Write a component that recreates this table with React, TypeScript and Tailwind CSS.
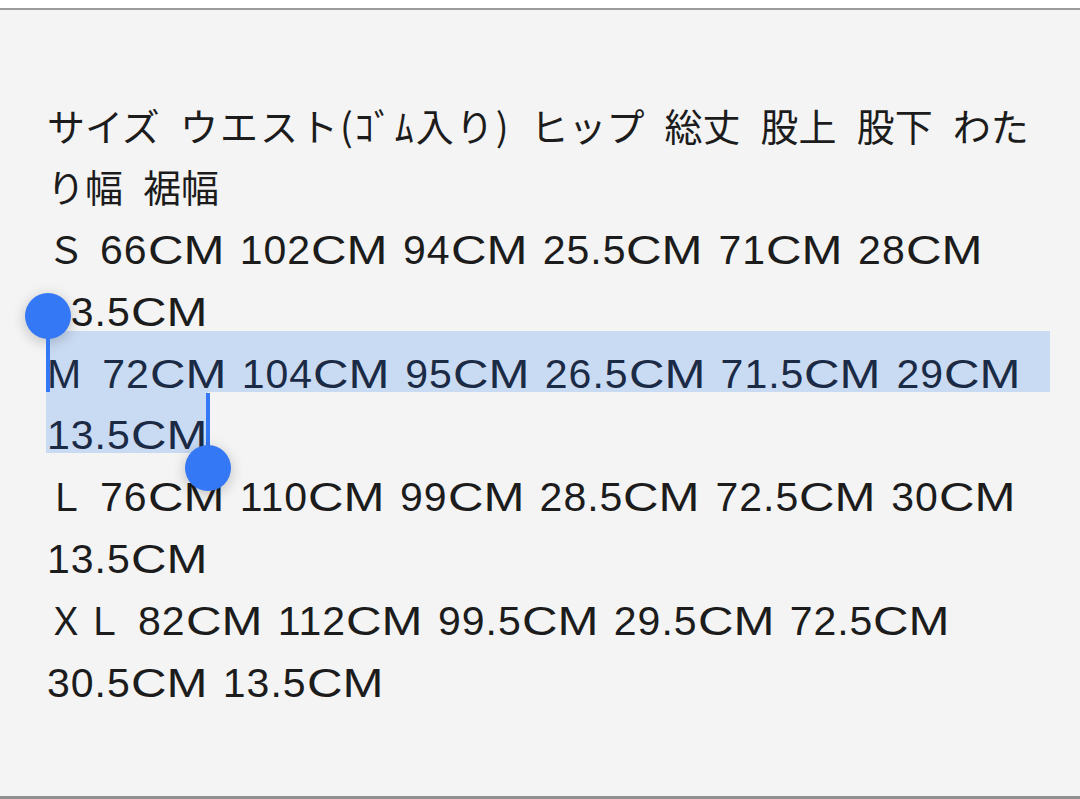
import React from "react";

const lines: string[][] = [
  ["サイズ", "ウエスト(ｺﾞﾑ入り)", "ヒップ", "総丈", "股上", "股下", "わた"],
  ["り幅", "裾幅"],
  ["Ｓ", "66CM", "102CM", "94CM", "25.5CM", "71CM", "28CM"],
  ["13.5CM"],
  ["M", "72CM", "104CM", "95CM", "26.5CM", "71.5CM", "29CM"],
  ["13.5CM"],
  ["Ｌ", "76CM", "110CM", "99CM", "28.5CM", "72.5CM", "30CM"],
  ["13.5CM"],
  ["ＸＬ", "82CM", "112CM", "99.5CM", "29.5CM", "72.5CM"],
  ["30.5CM", "13.5CM"],
];

const latin = { fontFamily: '"Liberation Sans", Arial, sans-serif' };

// one word of a line; numbers + CM get the wider latin treatment
function Token({ t, last }: { t: string; last: boolean }) {
  const m = t.match(/^([0-9.]+)(CM)$/);
  if (m) {
    return (
      <span className={"text-[41px] leading-none " + (last ? "" : "mr-[18px]")} style={latin}>
        <span className="tracking-[1px]">{m[1]}</span>
        <span className="inline-block w-[74px]">
          <span className="inline-block origin-left scale-x-[1.2]">{m[2]}</span>
        </span>
      </span>
    );
  }
  if (t === "M") {
    return (
      <span className="mr-[21px] text-[41px] leading-none" style={latin}>
        M
      </span>
    );
  }
  if (/^[Ａ-Ｚ]+$/.test(t)) {
    return <span className="mr-[15px]">{t}</span>;
  }
  if (t.includes("(")) {
    return <span className="mr-[20px] tracking-[2px]">{t}</span>;
  }
  return <span className={last ? "" : "mr-[20px]"}>{t}</span>;
}

function Handle() {
  return (
    <div className="h-[46px] w-[46px] rounded-full bg-[#3478f6] shadow-[0_3px_14px_rgba(0,0,0,0.22)]" />
  );
}

export default function App() {
  return (
    <div className="flex h-[799px] w-[1080px] flex-col bg-white">
      <div className="h-[8px] bg-white" />
      <div className="h-[2px] bg-[#9b9b9b]" />
      <div className="relative flex-1 bg-[#f4f4f4] px-[47px] pt-[83.5px]">
        {/* selection highlight */}
        <div className="absolute left-[46px] top-[321px] h-[61px] w-[1004px] bg-[#c9dbf3]" />
        <div className="absolute left-[46px] top-[382px] h-[61px] w-[162px] bg-[#c9dbf3]" />

        <div
          className="relative text-[38px] leading-[61.8px] text-[#1c1c1c]"
          style={{ fontFamily: '"Noto Sans CJK JP", "Noto Sans", sans-serif' }}
        >
          {lines.map((l, i) => (
            <div
              key={i}
              className={
                "h-[61.8px] whitespace-nowrap " +
                (i === 4 || i === 5 ? "text-[#1b2a45]" : "")
              }
            >
              {l.map((t, j) => (
                <Token key={j} t={t} last={j === l.length - 1} />
              ))}
            </div>
          ))}
        </div>

        {/* start handle */}
        <div className="absolute left-[25px] top-[283px] flex flex-col items-center">
          <Handle />
          <div className="-mt-[4px] h-[57px] w-[4px] bg-[#3478f6]" />
        </div>
        {/* end handle */}
        <div className="absolute left-[185px] top-[383px] flex flex-col items-center">
          <div className="h-[56px] w-[4px] bg-[#3478f6]" />
          <div className="-mt-[4px]">
            <Handle />
          </div>
        </div>
      </div>
      <div className="h-[3px] bg-[#8f8f8f]" />
    </div>
  );
}
